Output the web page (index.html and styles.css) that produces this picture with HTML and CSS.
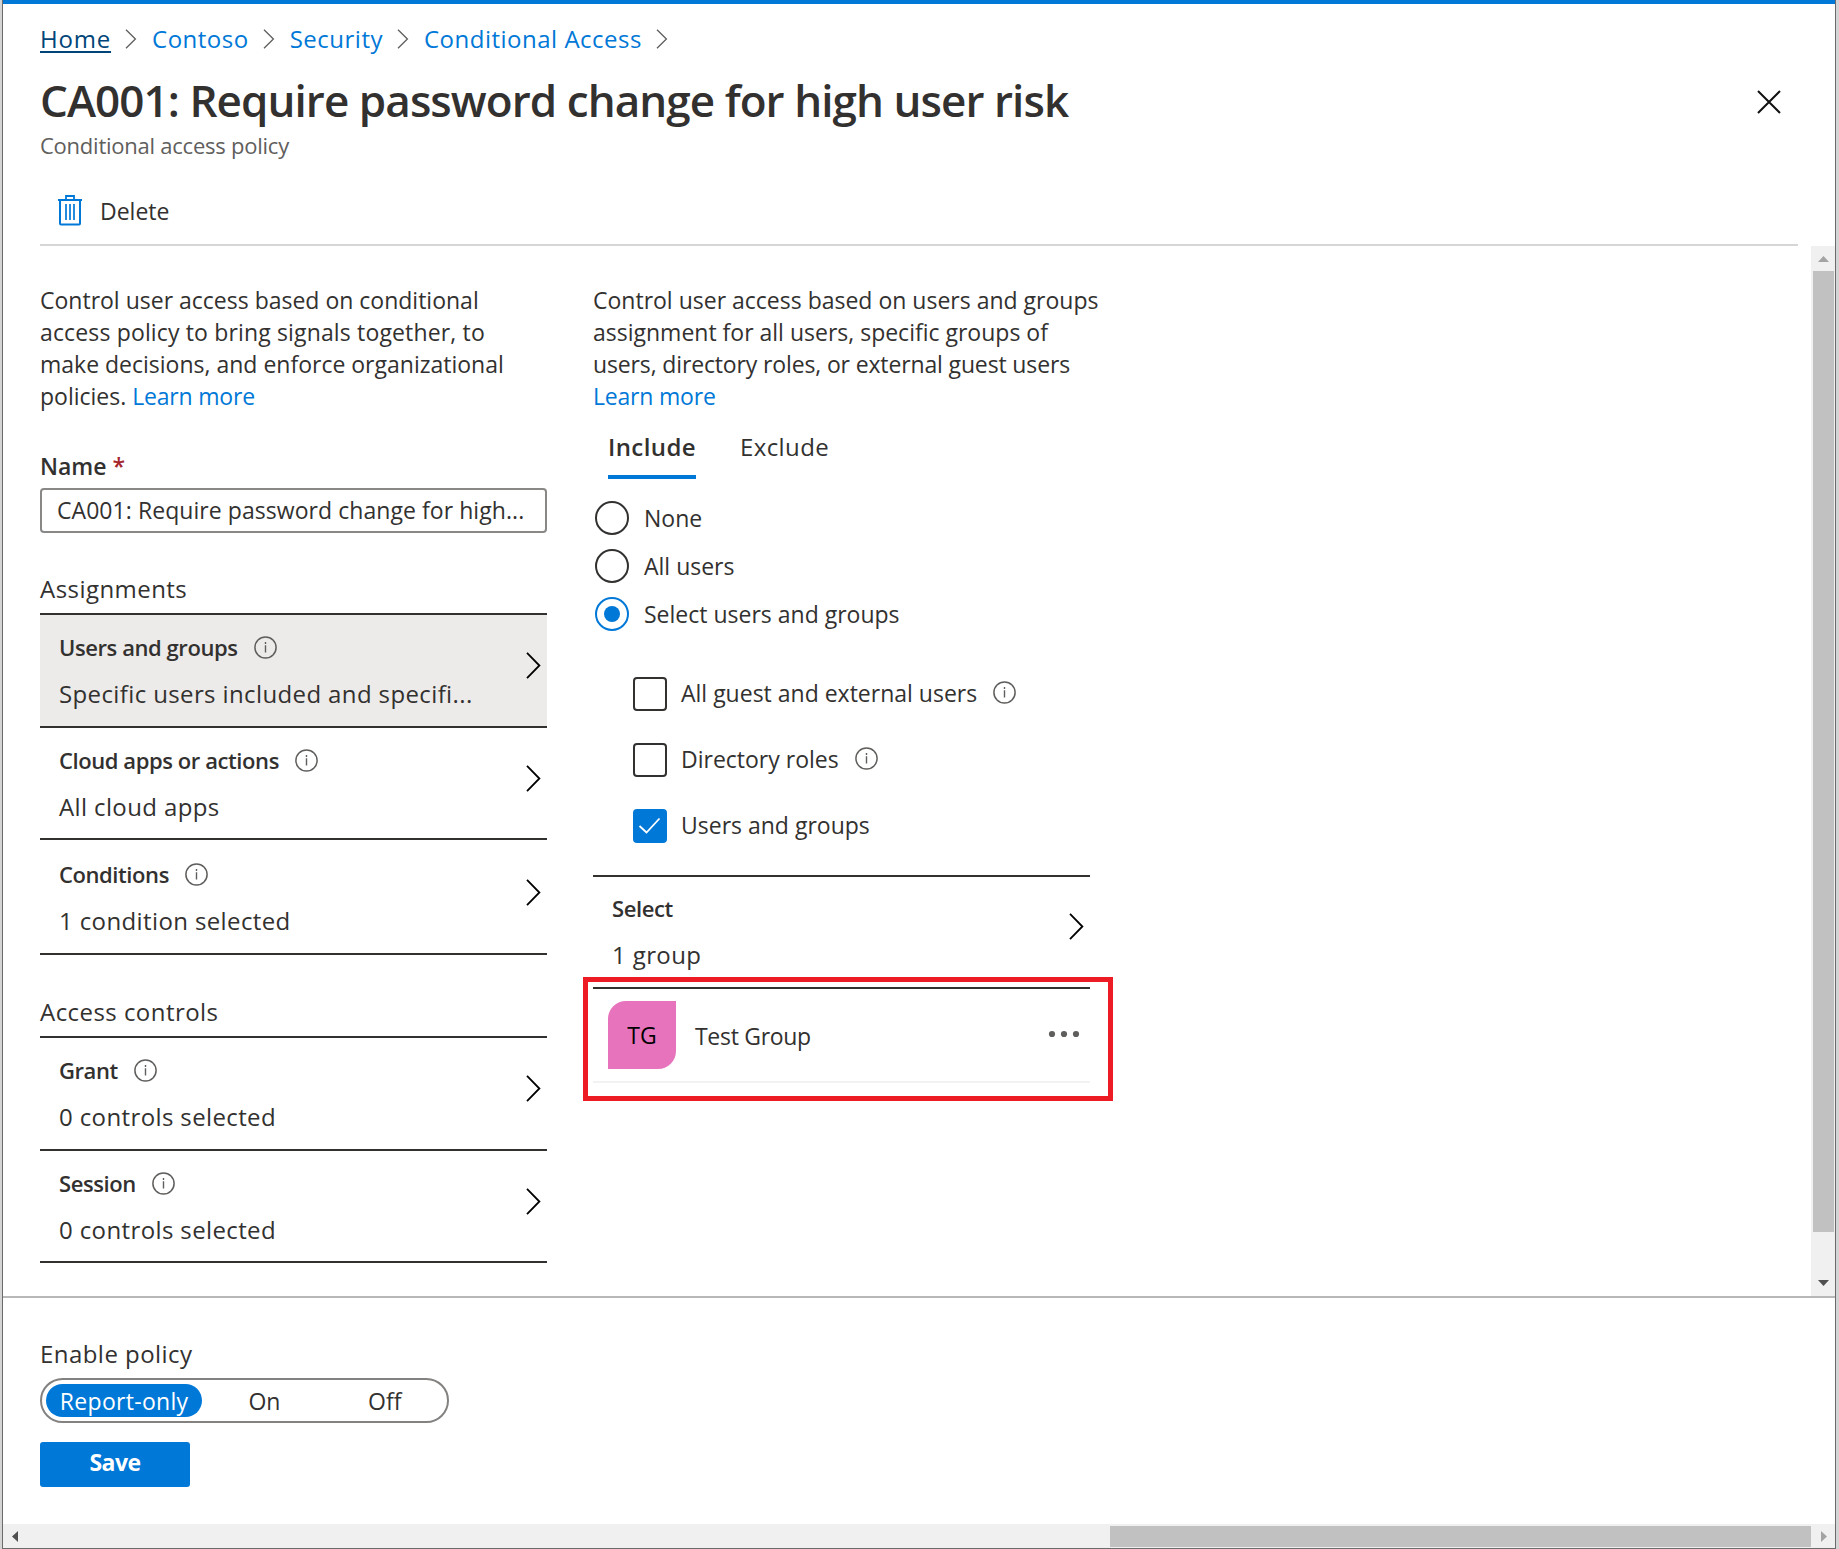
FILE: index.html
```html
<!DOCTYPE html>
<html lang="en">
<head>
<meta charset="utf-8">
<title>CA001: Require password change for high user risk</title>
<link rel="stylesheet" href="styles.css">
</head>
<body>
<svg class="sprite" aria-hidden="true">
  <symbol id="info" viewBox="0 0 23 23"><circle cx="11.5" cy="11.5" r="10.6" fill="none" stroke="#605e5c" stroke-width="1.5"/><path d="M11.5 9.2v7.4M11.5 6v1.9" stroke="#605e5c" stroke-width="1.4" fill="none"/></symbol>
  <symbol id="chevron" viewBox="0 0 15 27"><path d="M1 .8 13.4 13.5 1 26.2" fill="none" stroke="#000" stroke-width="1.8"/></symbol>
  <symbol id="crumb" viewBox="0 0 12 20"><path d="M1 .7 10.4 10 1 19.3" fill="none" stroke="#605e5c" stroke-width="1.3"/></symbol>
</svg>
<div class="window">
  <header class="header">
    <nav class="breadcrumb">
      <a class="link home">Home</a><svg class="sep"><use href="#crumb"/></svg>
      <a class="link">Contoso</a><svg class="sep"><use href="#crumb"/></svg>
      <a class="link">Security</a><svg class="sep"><use href="#crumb"/></svg>
      <a class="link">Conditional Access</a><svg class="sep"><use href="#crumb"/></svg>
    </nav>
    <div class="title-row">
      <h1 class="title">CA001: Require password change for high user risk</h1>
      <svg class="close" viewBox="0 0 24 24"><path d="M1 1 23 23M23 1 1 23" stroke="#111" stroke-width="2" fill="none"/></svg>
    </div>
    <p class="subtitle">Conditional access policy</p>
    <div class="toolbar">
      <svg class="trash" viewBox="0 0 26 32" fill="none" stroke="#0078d7"><path d="M1 6h24" stroke-width="2"/><path d="M9 5.500V2h8v3.500" stroke-width="1.800"/><path d="M3 6v23.500q0 1 1 1h18q1 0 1-1V6" stroke-width="2"/><path d="M9 10v16M13 10v16M17 10v16" stroke-width="1.700"/></svg>
      <span>Delete</span>
    </div>
  </header>

  <main class="main">
    <section class="policy">
      <p class="intro">Control user access based on conditional<br><span class="loose">access policy to bring signals together, to</span><br>make decisions, and enforce organizational<br>policies. <a class="link">Learn more</a></p>
      <label class="name">Name <span class="required">*</span></label>
      <div class="input">CA001: Require password change for high...</div>

      <h2 class="group-title first">Assignments</h2>
      <div class="blades">
        <div class="blade selected">
          <div><h3 class="blade-title">Users and groups<svg class="info"><use href="#info"/></svg></h3><p class="value">Specific users included and specifi...</p></div>
          <svg class="chevron"><use href="#chevron"/></svg>
        </div>
        <div class="blade short">
          <div><h3 class="blade-title">Cloud apps or actions<svg class="info"><use href="#info"/></svg></h3><p class="value">All cloud apps</p></div>
          <svg class="chevron"><use href="#chevron"/></svg>
        </div>
        <div class="blade tall">
          <div><h3 class="blade-title">Conditions<svg class="info"><use href="#info"/></svg></h3><p class="value">1 condition selected</p></div>
          <svg class="chevron"><use href="#chevron"/></svg>
        </div>
      </div>

      <h2 class="group-title">Access controls</h2>
      <div class="blades">
        <div class="blade">
          <div><h3 class="blade-title">Grant<svg class="info"><use href="#info"/></svg></h3><p class="value">0 controls selected</p></div>
          <svg class="chevron"><use href="#chevron"/></svg>
        </div>
        <div class="blade short">
          <div><h3 class="blade-title">Session<svg class="info"><use href="#info"/></svg></h3><p class="value">0 controls selected</p></div>
          <svg class="chevron"><use href="#chevron"/></svg>
        </div>
      </div>
    </section>

    <section class="assignment">
      <p class="intro">Control user access based on users and groups<br>assignment for all users, specific groups of<br><span class="tight">users, directory roles, or external guest users</span><br><a class="link">Learn more</a></p>
      <div class="tabs">
        <span class="tab active">Include</span>
        <span class="tab">Exclude</span>
      </div>
      <div class="radios">
        <label class="option"><i class="radio"></i>None</label>
        <label class="option"><i class="radio"></i>All users</label>
        <label class="option"><i class="radio on"></i>Select users and groups</label>
      </div>
      <div class="checks">
        <label class="option"><i class="box"></i><span class="label">All guest and external users</span><svg class="info"><use href="#info"/></svg></label>
        <label class="option"><i class="box"></i><span class="label">Directory roles</span><svg class="info"><use href="#info"/></svg></label>
        <label class="option"><i class="box on"><svg viewBox="0 0 34 34"><path d="M6.500 17 13.500 23.500 26.500 9.500" fill="none" stroke="#fff" stroke-width="1.800"/></svg></i><span class="label">Users and groups</span></label>
      </div>
      <div class="blades picker">
        <div class="blade">
          <div><h3 class="blade-title">Select</h3><p class="value">1 group</p></div>
          <svg class="chevron"><use href="#chevron"/></svg>
        </div>
        <div class="member">
          <span class="avatar">TG</span>
          <span class="member-name">Test Group</span>
          <svg class="more" viewBox="0 0 32 8" fill="#605e5c"><circle cx="4" cy="4" r="3.100"/><circle cx="16" cy="4" r="3.100"/><circle cx="28" cy="4" r="3.100"/></svg>
        </div>
      </div>
    </section>

    <div class="vscroll">
      <svg class="arrow-up" viewBox="0 0 11 6"><path d="M5.500 0 11 6H0z" fill="#a3a3a3"/></svg>
      <div class="vthumb"></div>
      <svg class="arrow-down" viewBox="0 0 11 6"><path d="M0 0h11L5.500 6z" fill="#505050"/></svg>
    </div>
  </main>

  <footer class="footer">
    <div class="enable">Enable policy</div>
    <div class="toggle"><span class="seg chosen">Report-only</span><span class="seg seg-on">On</span><span class="seg seg-off">Off</span></div>
    <button class="save">Save</button>
  </footer>

  <div class="hscroll">
    <svg class="arrow-left" viewBox="0 0 6 11"><path d="M6 0v11L0 5.500z" fill="#505050"/></svg>
    <div class="hthumb"></div>
    <svg class="arrow-right" viewBox="0 0 6 11"><path d="M0 0v11l6-5.500z" fill="#a3a3a3"/></svg>
  </div>
</div>
</body>
</html>
```
FILE: styles.css
```css
* { box-sizing: border-box; }
body {
  margin: 0;
  background: #d4d4d4;
  color: #323130;
  font-family: "Open Sans", "Noto Sans", sans-serif;
  font-size: 23px;
  line-height: 32px;
  white-space: nowrap;
  overflow: hidden;
}
h1, h2, h3, p { margin: 0; font-weight: 400; }
svg { display: block; flex: none; }
.sprite { display: none; }
.link { color: #0078d7; }

.window {
  display: flex;
  flex-direction: column;
  width: 1834px;
  height: 1549px;
  margin-left: 2px;
  background: #fff;
  border: solid #6b6b6e;
  border-width: 0 1px 1px;
}

/* Header */
.header { height: 246px; padding: 19px 0 0 37px; border-top: 4px solid #0078d7; }
.breadcrumb { display: flex; align-items: center; font-size: 24px; letter-spacing: .5px; }
.sep { width: 12px; height: 20px; margin: 0 15px 0 14px; }
.home { color: #004578; letter-spacing: .8px; text-decoration: underline; text-decoration-thickness: 2px; text-underline-offset: 3px; }
.title-row { display: flex; align-items: center; justify-content: space-between; margin-top: 15px; padding-right: 54px; }
.title { font-size: 44px; font-weight: 600; line-height: 60px; letter-spacing: -.93px; }
.close { width: 24px; height: 24px; margin-top: 3px; }
.subtitle { margin-top: -1px; font-size: 22px; letter-spacing: -.24px; color: #605e5c; }
.toolbar {
  display: flex;
  align-items: center;
  gap: 17px;
  height: 51px;
  width: 1758px;
  margin-top: 34px;
  padding: 0 0 17px 17px;
  border-bottom: 2px solid #d6d6d6;
}
.trash { width: 26px; height: 32px; margin-top: -2px; }

/* Body */
.main { display: flex; height: 1050px; }
.policy { width: 544px; padding: 38px 0 0 37px; }
.assignment { flex: 1; padding: 38px 0 0 46px; }
.intro .link { letter-spacing: -.2px; }
.loose { letter-spacing: .15px; }
.tight { letter-spacing: -.14px; }
.name { display: block; margin-top: 38px; font-weight: 600; }
.required { color: #a4262c; }
.input {
  height: 45px;
  margin-top: 6px;
  padding: 4px 15px;
  border: 2px solid #8a8886;
  border-radius: 4px;
  letter-spacing: .06px;
}
.group-title { margin: 41px 0 8px; font-size: 24px; letter-spacing: .45px; }
.group-title.first { margin-top: 40px; }

.blades { border-top: 2px solid #323130; }
.blade {
  display: flex;
  justify-content: space-between;
  height: 113px;
  padding: 16px 6px 0 19px;
  border-bottom: 2px solid #323130;
}
.blade.short { height: 112px; }
.blade.tall { height: 115px; padding-top: 18px; }
.blade.selected { background: #edebe9; }
.blade-title { display: flex; align-items: center; font-size: 22px; font-weight: 600; letter-spacing: -.42px; }
.blade-title .info { margin: 1px 0 0 16px; }
.value { margin-top: 15px; font-size: 24px; letter-spacing: .38px; }
.info { width: 23px; height: 23px; }
.chevron { width: 15px; height: 27px; margin-top: 21px; }

/* Assignment column */
.tabs { display: flex; gap: 44px; margin-top: 19px; padding-left: 15px; font-size: 24px; letter-spacing: .4px; }
.tab { height: 48px; }
.tab.active { width: 88px; font-weight: 600; border-bottom: 4px solid #0078d7; }
.option { display: flex; align-items: center; height: 34px; }
.radios { display: grid; gap: 14px; margin-top: 22px; padding-left: 2px; }
.radio { display: grid; place-items: center; width: 34px; height: 34px; margin-right: 15px; border: 2px solid #323130; border-radius: 50%; }
.radio.on { border-color: #0078d7; }
.radio.on::after { content: ""; width: 16px; height: 16px; border-radius: 50%; background: #0078d7; }
.checks { display: grid; gap: 32px; margin-top: 46px; padding-left: 40px; }
.box { width: 34px; height: 34px; margin-right: 14px; border: 2px solid #323130; border-radius: 4px; }
.box.on { background: #0078d7; border: 0; }
.label { margin-top: -3px; }
.option .info { margin: -4px 0 0 16px; }
.picker { width: 497px; margin-top: 32px; }
.picker .blade { height: 112px; padding-top: 15px; }
.member { position: relative; display: flex; align-items: center; height: 94px; padding: 0 10px 0 15px; border-bottom: 2px solid #f2f2f2; }
.member::after { content: ""; position: absolute; inset: -12px -23px -20px -10px; border: 5px solid #ed1c24; }
.avatar { display: grid; place-items: center; width: 68px; height: 68px; border-radius: 18px 0; background: #e873bd; color: #000; }
.member-name { flex: 1; margin: 2px 0 0 19px; letter-spacing: -.3px; }
.more { width: 32px; height: 8px; margin-top: -2px; }

/* Scroll bars */
.vscroll { display: flex; flex-direction: column; align-items: center; width: 24px; padding: 10px 0; background: #f0f0f0; }
.vthumb { width: 21px; height: 961px; margin: 9px 0 auto 1px; background: #c1c1c1; }
.arrow-up, .arrow-down { width: 11px; height: 6px; }
.hscroll { display: flex; align-items: center; height: 24px; padding: 0 8px 0 9px; background: #f0f0f0; }
.hthumb { width: 701px; height: 21px; margin: 1px 10px 0 auto; background: #c1c1c1; }
.arrow-left, .arrow-right { width: 6px; height: 11px; }

/* Footer */
.footer { height: 228px; padding: 40px 0 0 37px; border-top: 2px solid #b8b8b8; }
.enable { font-size: 24px; letter-spacing: .45px; }
.toggle { display: flex; width: 409px; height: 45px; margin-top: 8px; padding: 4px; border: 2px solid #848280; border-radius: 23px; }
.seg { height: 33px; line-height: 34px; text-align: center; }
.chosen { width: 157px; border-radius: 17px; background: #0078d7; color: #fff; letter-spacing: .3px; }
.seg-on { width: 125px; }
.seg-off { width: 117px; }
.save {
  display: block;
  width: 150px;
  height: 45px;
  margin-top: 19px;
  padding: 0 0 6px;
  border: 0;
  border-radius: 3px;
  background: #0078d7;
  color: #fff;
  font: 700 23px/32px "Open Sans", "Noto Sans", sans-serif;
  letter-spacing: -.5px;
}
```
